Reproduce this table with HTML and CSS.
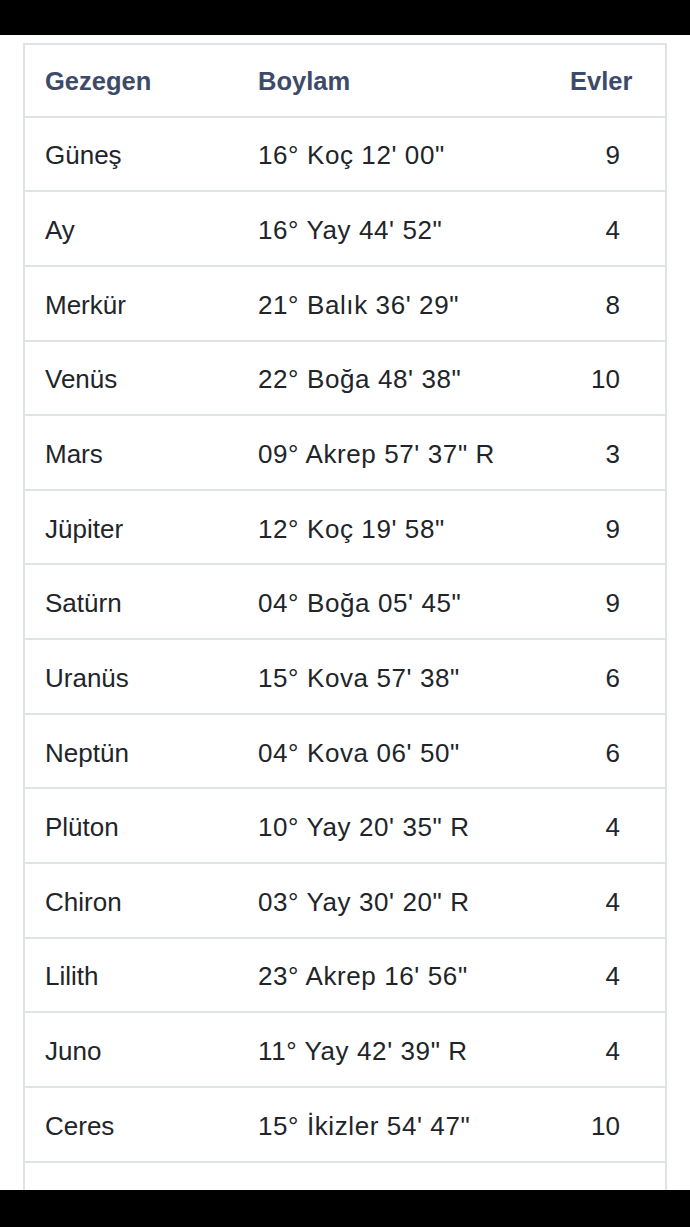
FILE: index.html
```html
<!DOCTYPE html>
<html lang="tr">
<head>
<meta charset="utf-8">
<title>Gezegenler</title>
<link rel="stylesheet" href="styles.css">
</head>
<body>
<div class="topbar"></div>
<main class="content">
  <table class="planets">
    <thead>
      <tr><th class="c1">Gezegen</th><th class="c2">Boylam</th><th class="c3">Evler</th></tr>
    </thead>
    <tbody>
      <tr><td class="c1">Güneş</td><td class="c2">16° Koç 12' 00"</td><td class="c3">9</td></tr>
      <tr><td class="c1">Ay</td><td class="c2">16° Yay 44' 52"</td><td class="c3">4</td></tr>
      <tr><td class="c1">Merkür</td><td class="c2">21° Balık 36' 29"</td><td class="c3">8</td></tr>
      <tr><td class="c1">Venüs</td><td class="c2">22° Boğa 48' 38"</td><td class="c3">10</td></tr>
      <tr><td class="c1">Mars</td><td class="c2">09° Akrep 57' 37" R</td><td class="c3">3</td></tr>
      <tr><td class="c1">Jüpiter</td><td class="c2">12° Koç 19' 58"</td><td class="c3">9</td></tr>
      <tr><td class="c1">Satürn</td><td class="c2">04° Boğa 05' 45"</td><td class="c3">9</td></tr>
      <tr><td class="c1">Uranüs</td><td class="c2">15° Kova 57' 38"</td><td class="c3">6</td></tr>
      <tr><td class="c1">Neptün</td><td class="c2">04° Kova 06' 50"</td><td class="c3">6</td></tr>
      <tr><td class="c1">Plüton</td><td class="c2">10° Yay 20' 35" R</td><td class="c3">4</td></tr>
      <tr><td class="c1">Chiron</td><td class="c2">03° Yay 30' 20" R</td><td class="c3">4</td></tr>
      <tr><td class="c1">Lilith</td><td class="c2">23° Akrep 16' 56"</td><td class="c3">4</td></tr>
      <tr><td class="c1">Juno</td><td class="c2">11° Yay 42' 39" R</td><td class="c3">4</td></tr>
      <tr><td class="c1">Ceres</td><td class="c2">15° İkizler 54' 47"</td><td class="c3">10</td></tr>
      <tr><td class="c1">Vertex</td><td class="c2">27° Aslan 15' 36"</td><td class="c3">10</td></tr>
    </tbody>
  </table>
</main>
<div class="bottombar"></div>
</body>
</html>
```

FILE: styles.css
```css
html, body {
  margin: 0;
  padding: 0;
  background: #ffffff;
}

body {
  font-family: "Liberation Sans", Arial, sans-serif;
  color: #212529;
  overflow: hidden;
  height: 1227px;
}

.topbar {
  height: 35px;
  background: #000000;
}

.bottombar {
  position: fixed;
  left: 0;
  right: 0;
  bottom: 0;
  height: 37px;
  background: #000000;
}

.content {
  padding: 8px 27px 0 23px;
}

.planets {
  width: 640px;
  border-collapse: collapse;
  border: 2px solid #dfe2e6;
  table-layout: fixed;
}

.planets th,
.planets td {
  border-top: 2px solid #dfe2e6;
  height: 68.65px;
  padding: 4px 0 0 20px;
  vertical-align: middle;
  font-size: 26px;
  text-align: left;
  white-space: nowrap;
}

.planets th {
  height: 68.6px;
  padding-top: 2px;
  font-weight: 700;
  color: #3e4a69;
  font-size: 25.5px;
}

.planets td {
  font-weight: 400;
  color: #212529;
}

.planets td.c2 {
  letter-spacing: 0.6px;
}

.planets .c1 { width: 193px; }
.planets .c2 { width: 292px; }
.planets .c3 { width: 95px; }

.planets td.c3 {
  text-align: right;
  padding: 4px 45px 0 0;
}
```
